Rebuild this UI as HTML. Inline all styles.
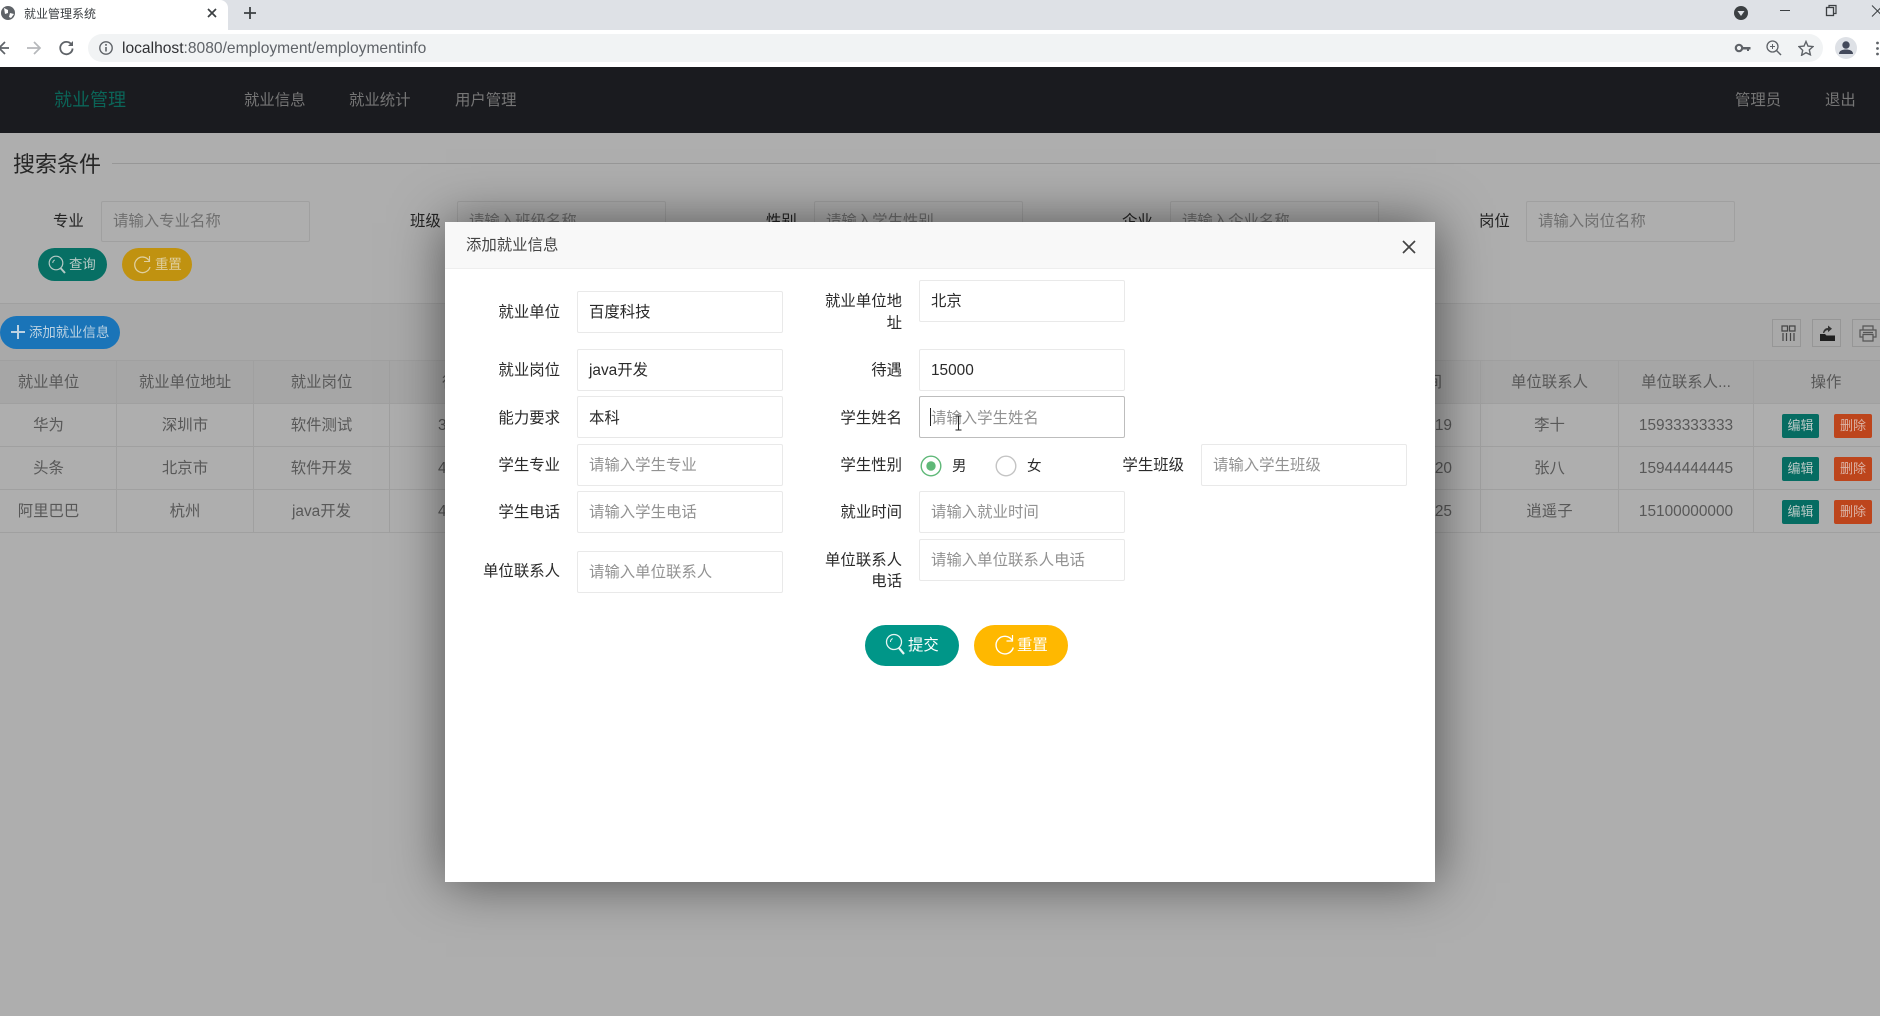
<!DOCTYPE html>
<html lang="zh"><head><meta charset="utf-8"><title>就业管理系统</title>
<style>
html,body{margin:0;padding:0;width:1880px;height:1016px;overflow:hidden;background:#aeaeae;font-family:"Liberation Sans","Noto Sans CJK SC",sans-serif;}
div,span,svg{position:absolute;}
.t{white-space:nowrap;font-size:15.4px;height:24px;line-height:24px;margin-top:1px;}
.l{color:#2a2a2a;text-align:right;}
.i{box-sizing:border-box;background:#fff;border:1px solid #e9e9e9;border-radius:2px;height:42px;padding-left:11px;line-height:42px;font-size:15.4px;color:#2a2a2a;white-space:nowrap;overflow:hidden;}
.p{color:#929292;}
.si{box-sizing:border-box;background:#aeaeae;border:1px solid #a0a0a0;border-radius:2px;height:41px;width:209px;top:201px;padding-left:11px;line-height:39px;font-size:15.4px;color:#6f6f6f;white-space:nowrap;overflow:hidden;}
.c{text-align:center;color:#585858;font-size:15.4px;height:24px;line-height:24px;margin-top:1px;white-space:nowrap;overflow:hidden;}
.v{background:#a0a0a0;width:1px;top:360px;height:173px;}
.h{background:#a0a0a0;height:1px;left:0;width:1880px;}
.e,.d{top:0;height:24px;border-radius:2px;color:#b9c9c6;font-size:13px;line-height:23px;text-align:center;}
.e{background:#066c62;width:37px;left:1782px;}
.d{background:#bd451c;width:38px;left:1834px;color:#dcb4a6;}
.tb{box-sizing:border-box;top:319px;width:29px;height:28px;border:1px solid #969696;}
</style></head><body>

<!-- browser chrome -->
<div style="left:0;top:0;width:1880px;height:30px;background:#dee1e6"></div>
<div style="left:0;top:0;width:228px;height:30px;background:#fff;border-radius:0 8px 0 0"></div>
<div style="left:0;top:30px;width:1880px;height:37px;background:#fff"></div>
<div style="left:88px;top:34px;width:1735px;height:28px;border-radius:14px;background:#f1f3f4"></div>
<svg style="left:0;top:4px" width="18" height="18" viewBox="0 0 18 18"><circle cx="8" cy="9" r="7" fill="#5f6368"/><path d="M4 4l4 2 0 3-3 1zM10 9l4 1-3 4-2-1z" fill="#fff"/></svg>
<div class="t" style="left:24px;top:1px;font-size:12px;color:#3c4043">就业管理系统</div>
<svg style="left:206px;top:7px" width="12" height="12" viewBox="0 0 12 12"><path d="M2 2l8 8M10 2l-8 8" stroke="#3c4043" stroke-width="1.7"/></svg>
<svg style="left:243px;top:6px" width="14" height="14" viewBox="0 0 14 14"><path d="M7 1v12M1 7h12" stroke="#3c4043" stroke-width="1.8"/></svg>
<svg style="left:0;top:40px" width="80" height="16" viewBox="0 0 80 16"><path d="M9 8H0M5 2l-6 6 6 6" fill="none" stroke="#5f6368" stroke-width="1.7"/><path d="M27 8h13M34 2l6 6-6 6" fill="none" stroke="#b6b8bb" stroke-width="1.7"/><path d="M71.500 4.500A6.200 6.200 0 1 0 72.600 8.500" fill="none" stroke="#5f6368" stroke-width="1.800"/><path d="M73 1v5h-5z" fill="#5f6368"/></svg>
<svg style="left:98px;top:40px" width="16" height="16" viewBox="0 0 16 16"><circle cx="8" cy="8" r="6.200" fill="none" stroke="#5f6368" stroke-width="1.400"/><path d="M8 7v4.500" stroke="#5f6368" stroke-width="1.600"/><circle cx="8" cy="4.900" r="1" fill="#5f6368"/></svg>
<div style="left:122px;top:37px;height:24px;line-height:24px;font-size:15.6px;white-space:nowrap;color:#303134">localhost<span style="position:static;color:#5f6368">:8080/employment/employmentinfo</span></div>
<svg style="left:1733px;top:3px" width="17" height="20" viewBox="0 0 17 20"><circle cx="8" cy="10" r="7" fill="#3c4043"/><path d="M4.500 8h7L8 13z" fill="#dee1e6"/></svg>
<svg style="left:1778px;top:4px" width="70" height="14" viewBox="0 0 70 14"><path d="M2 6.500h10" stroke="#3c4043" stroke-width="1"/><rect x="48.500" y="3.500" width="7" height="8" fill="none" stroke="#3c4043" stroke-width="1.300"/><path d="M51 3.500V1.500h7v8h-2.500" fill="none" stroke="#3c4043" stroke-width="1.200"/></svg>
<svg style="left:1870px;top:4px" width="10" height="14" viewBox="0 0 10 14"><path d="M2 1.500l11 11M13 1.500l-11 11" stroke="#3c4043" stroke-width="1"/></svg>
<svg style="left:1734px;top:40px" width="18" height="16" viewBox="0 0 18 16"><circle cx="5" cy="8" r="3.200" fill="none" stroke="#5f6368" stroke-width="2.200"/><path d="M8 7h8.500v2.500H15V11h-2V9.500H8z" fill="#5f6368"/></svg>
<svg style="left:1766px;top:40px" width="16" height="16" viewBox="0 0 16 16"><circle cx="6.500" cy="6.500" r="5.500" fill="none" stroke="#5f6368" stroke-width="1.300"/><path d="M10.500 10.500l4.500 4.500" stroke="#5f6368" stroke-width="1.500"/><path d="M6.500 4v5M4 6.500h5" stroke="#5f6368" stroke-width="1"/></svg>
<svg style="left:1798px;top:40px" width="16" height="16" viewBox="0 0 16 16"><path d="M8 1.500l2 4.600 5 .5-3.700 3.300 1.100 4.900L8 12.700l-4.400 2.600 1.100-4.900L1 6.600l5-.5z" fill="none" stroke="#5f6368" stroke-width="1.400"/></svg>
<svg style="left:1835px;top:37px" width="22" height="22" viewBox="0 0 22 22"><circle cx="11" cy="11" r="11" fill="#dee1e6"/><circle cx="11" cy="8" r="3.700" fill="#43495a"/><path d="M4 17c0-3.500 3.500-4.500 7-4.500s7 1 7 4.500z" fill="#43495a"/></svg>
<svg style="left:1875px;top:41px" width="5" height="16" viewBox="0 0 5 16"><circle cx="2.500" cy="2" r="1.400" fill="#5f6368"/><circle cx="2.500" cy="7.500" r="1.400" fill="#5f6368"/><circle cx="2.500" cy="13" r="1.400" fill="#5f6368"/></svg>

<!-- nav -->
<div style="left:0;top:67px;width:1880px;height:66px;background:#1a1b1f"></div>
<div class="t" style="left:54px;top:87px;font-size:18px;color:#0b6558">就业管理</div>
<div class="t" style="left:244px;top:88px;color:#767676">就业信息</div>
<div class="t" style="left:349px;top:88px;color:#767676">就业统计</div>
<div class="t" style="left:455px;top:88px;color:#767676">用户管理</div>
<div class="t" style="left:1735px;top:88px;color:#767676">管理员</div>
<div class="t" style="left:1825px;top:88px;color:#767676">退出</div>

<!-- search -->
<div class="t" style="left:13px;top:150px;font-size:22px;height:28px;line-height:28px;color:#262626">搜索条件</div>
<div style="left:112px;top:163px;width:1768px;height:1px;background:#979797"></div>
<div class="t" style="left:53px;top:209px;color:#222">专业</div><div class="si" style="left:101px">请输入专业名称</div>
<div class="t" style="left:410px;top:209px;color:#222">班级</div><div class="si" style="left:457px">请输入班级名称</div>
<div class="t" style="left:766px;top:209px;color:#222">性别</div><div class="si" style="left:814px">请输入学生性别</div>
<div class="t" style="left:1122px;top:209px;color:#222">企业</div><div class="si" style="left:1170px">请输入企业名称</div>
<div class="t" style="left:1479px;top:209px;color:#222">岗位</div><div class="si" style="left:1526px">请输入岗位名称</div>

<div style="left:38px;top:248px;width:69px;height:33px;border-radius:17px;background:#076f64"></div>
<svg style="left:48px;top:254px" width="20" height="21" viewBox="0 0 20 21"><circle cx="8" cy="9" r="6.800" fill="none" stroke="#b5c9c5" stroke-width="1.200"/><path d="M12.500 14l4.500 5" stroke="#b5c9c5" stroke-width="2"/><path d="M4.800 9a3.200 3.200 0 0 1 2-3" fill="none" stroke="#b5c9c5"/></svg>
<div class="t" style="left:69px;top:252px;font-size:13.400px;color:#b5c9c5">查询</div>
<div style="left:122px;top:248px;width:70px;height:33px;border-radius:17px;background:#c09210"></div>
<svg style="left:133px;top:254px" width="20" height="21" viewBox="0 0 20 21"><path d="M16 6.500A7.800 7.800 0 1 0 17 13" fill="none" stroke="#dfcf9f" stroke-width="1.300"/><path d="M16.500 2v5.500H11" fill="none" stroke="#dfcf9f" stroke-width="1.100"/></svg>
<div class="t" style="left:155px;top:252px;font-size:13.400px;color:#dfcf9f">重置</div>

<!-- table region -->
<div style="left:0;top:303px;width:1880px;height:57px;background:#a9a9a9"></div>
<div class="h" style="top:303px"></div>
<div style="left:0;top:316px;width:120px;height:33px;border-radius:17px;background:#1a74b8"></div>
<svg style="left:11px;top:325px" width="14" height="14" viewBox="0 0 14 14"><path d="M7 0v14M0 7h14" stroke="#bcd2e2" stroke-width="2"/></svg>
<div class="t" style="left:29px;top:320px;font-size:13.400px;color:#bcd2e2">添加就业信息</div>
<div class="tb" style="left:1772px"></div><div class="tb" style="left:1812px"></div><div class="tb" style="left:1852px;width:40px"></div>
<svg style="left:1781px;top:325px" width="15" height="16" viewBox="0 0 15 16"><path d="M1 1h5.500v5H1zM8.500 1H14v5H8.500zM2 8v8M5.500 8v8M9.500 8v8M13 8v8" fill="none" stroke="#444" stroke-width="1.200"/></svg>
<svg style="left:1820px;top:324px" width="15" height="18" viewBox="0 0 15 18"><path d="M0 10h5l1.500 1.500H15V17H0z" fill="#1f1f1f"/><path d="M3 9C3.500 5.500 5.500 4 8 4V1.500l4 3.300-4 3.300V6.100C6.200 6.100 5 7 4.200 9z" fill="#333"/></svg>
<svg style="left:1859px;top:325px" width="18" height="17" viewBox="0 0 18 17"><path d="M4 5V1h10v4M4 12H1V5h16v7h-3M4 9.500h10V16H4zM4 7.500h10" fill="none" stroke="#555" stroke-width="1.200"/></svg>

<div style="left:0;top:360px;width:1880px;height:43px;background:#a6a6a6"></div>
<div class="h" style="top:360px"></div><div class="h" style="top:403px"></div><div class="h" style="top:446px"></div><div class="h" style="top:489px"></div><div class="h" style="top:532px"></div>
<div class="v" style="left:116px"></div><div class="v" style="left:253px"></div><div class="v" style="left:389px"></div><div class="v" style="left:1480px"></div><div class="v" style="left:1618px"></div><div class="v" style="left:1753px"></div>

<div class="c" style="left:0;top:370px;width:97px">就业单位</div><div class="c" style="left:117px;top:370px;width:136px">就业单位地址</div><div class="c" style="left:254px;top:370px;width:135px">就业岗位</div><div class="t" style="left:442px;top:370px;color:#585858">待遇</div>
<div class="t" style="left:1378px;top:370px;width:64px;text-align:right;color:#585858">就业时间</div><div class="c" style="left:1481px;top:370px;width:137px">单位联系人</div><div class="c" style="left:1619px;top:370px;width:134px">单位联系人...</div><div class="c" style="left:1754px;top:370px;width:144px">操作</div>

<div class="c" style="left:0;top:413px;width:97px">华为</div><div class="c" style="left:117px;top:413px;width:136px">深圳市</div><div class="c" style="left:254px;top:413px;width:135px">软件测试</div><div class="t" style="left:438px;top:413px;color:#585858">3000</div>
<div class="t" style="left:1372px;top:413px;width:80px;text-align:right;color:#585858">2020-05-19</div><div class="c" style="left:1481px;top:413px;width:137px">李十</div><div class="c" style="left:1619px;top:413px;width:134px">15933333333</div>
<div style="left:0;top:414px"><div class="e">编辑</div><div class="d">删除</div></div>

<div class="c" style="left:0;top:456px;width:97px">头条</div><div class="c" style="left:117px;top:456px;width:136px">北京市</div><div class="c" style="left:254px;top:456px;width:135px">软件开发</div><div class="t" style="left:438px;top:456px;color:#585858">4000</div>
<div class="t" style="left:1372px;top:456px;width:80px;text-align:right;color:#585858">2020-05-20</div><div class="c" style="left:1481px;top:456px;width:137px">张八</div><div class="c" style="left:1619px;top:456px;width:134px">15944444445</div>
<div style="left:0;top:457px"><div class="e">编辑</div><div class="d">删除</div></div>

<div class="c" style="left:0;top:499px;width:97px">阿里巴巴</div><div class="c" style="left:117px;top:499px;width:136px">杭州</div><div class="c" style="left:254px;top:499px;width:135px">java开发</div><div class="t" style="left:438px;top:499px;color:#585858">4500</div>
<div class="t" style="left:1372px;top:499px;width:80px;text-align:right;color:#585858">2020-05-25</div><div class="c" style="left:1481px;top:499px;width:137px">逍遥子</div><div class="c" style="left:1619px;top:499px;width:134px">15100000000</div>
<div style="left:0;top:500px"><div class="e">编辑</div><div class="d">删除</div></div>

<!-- modal -->
<div style="left:445px;top:222px;width:990px;height:660px;background:#fff;box-shadow:1px 1px 50px rgba(0,0,0,.55)"></div>
<div style="left:445px;top:222px;width:990px;height:46px;background:#f8f8f8;border-bottom:1px solid #eee"></div>
<div class="t" style="left:466px;top:233px;color:#444">添加就业信息</div>
<svg style="left:1402px;top:240px" width="14" height="14" viewBox="0 0 14 14"><path d="M1 1l12 12M13 1L1 13" stroke="#444" stroke-width="1.700"/></svg>

<div class="t l" style="left:440px;width:120px;top:300px">就业单位</div><div class="i" style="left:577px;top:291px;width:206px">百度科技</div>
<div class="t l" style="left:782px;width:120px;top:289px">就业单位地</div><div class="t l" style="left:782px;width:120px;top:311px">址</div><div class="i" style="left:919px;top:280px;width:206px">北京</div>
<div class="t l" style="left:440px;width:120px;top:358px">就业岗位</div><div class="i" style="left:577px;top:349px;width:206px">java开发</div>
<div class="t l" style="left:782px;width:120px;top:358px">待遇</div><div class="i" style="left:919px;top:349px;width:206px">15000</div>
<div class="t l" style="left:440px;width:120px;top:406px">能力要求</div><div class="i" style="left:577px;top:396px;width:206px;line-height:44px">本科</div>
<div class="t l" style="left:782px;width:120px;top:406px">学生姓名</div><div class="i p" style="left:919px;top:396px;width:206px;border-color:#bdbdbd;line-height:44px">请输入学生姓名</div>
<div style="left:930px;top:408px;width:1px;height:18px;background:#222"></div>
<svg style="left:954px;top:415px" width="9" height="16" viewBox="0 0 9 16"><path d="M1.500 1h6M1.500 15h6M4.500 1v14" stroke="#222" stroke-width="1" fill="none"/></svg>
<div class="t l" style="left:440px;width:120px;top:453px">学生专业</div><div class="i p" style="left:577px;top:444px;width:206px">请输入学生专业</div>
<div class="t l" style="left:782px;width:120px;top:453px">学生性别</div>
<svg style="left:920px;top:455px" width="22" height="22" viewBox="0 0 22 22"><circle cx="11" cy="11" r="9.800" fill="none" stroke="#5fb878" stroke-width="1.400"/><circle cx="11" cy="11" r="4.700" fill="#5fb878"/></svg>
<div class="t" style="left:952px;top:454px;font-size:14.500px;color:#2a2a2a">男</div>
<svg style="left:995px;top:455px" width="22" height="22" viewBox="0 0 22 22"><circle cx="11" cy="11" r="9.800" fill="none" stroke="#c4c4c4" stroke-width="1.400"/></svg>
<div class="t" style="left:1027px;top:454px;font-size:14.500px;color:#2a2a2a">女</div>
<div class="t l" style="left:1064px;width:120px;top:453px">学生班级</div><div class="i p" style="left:1201px;top:444px;width:206px">请输入学生班级</div>
<div class="t l" style="left:440px;width:120px;top:500px">学生电话</div><div class="i p" style="left:577px;top:491px;width:206px">请输入学生电话</div>
<div class="t l" style="left:782px;width:120px;top:500px">就业时间</div><div class="i p" style="left:919px;top:491px;width:206px">请输入就业时间</div>
<div class="t l" style="left:440px;width:120px;top:559px">单位联系人</div><div class="i p" style="left:577px;top:551px;width:206px;line-height:41px">请输入单位联系人</div>
<div class="t l" style="left:782px;width:120px;top:548px">单位联系人</div><div class="t l" style="left:782px;width:120px;top:569px">电话</div><div class="i p" style="left:919px;top:539px;width:206px;line-height:41px">请输入单位联系人电话</div>

<div style="left:865px;top:625px;width:94px;height:41px;border-radius:21px;background:#009688"></div>
<svg style="left:885px;top:632px" width="22" height="24" viewBox="0 0 22 24"><circle cx="9" cy="10" r="7.500" fill="none" stroke="#e8f5f3" stroke-width="1.300"/><path d="M14 16l5 6" stroke="#e8f5f3" stroke-width="2.200"/><path d="M5.500 10a3.600 3.600 0 0 1 2.200-3.400" fill="none" stroke="#e8f5f3"/></svg>
<div class="t" style="left:908px;top:633px;color:#fff">提交</div>
<div style="left:974px;top:625px;width:94px;height:41px;border-radius:21px;background:#ffb800"></div>
<svg style="left:994px;top:633px" width="22" height="23" viewBox="0 0 22 23"><path d="M18 7A8.800 8.800 0 1 0 19.300 14.500" fill="none" stroke="#fff" stroke-width="1.400"/><path d="M18.500 2v6H12.500" fill="none" stroke="#fff" stroke-width="1.200"/></svg>
<div class="t" style="left:1017px;top:633px;color:#fff">重置</div>
</body></html>
